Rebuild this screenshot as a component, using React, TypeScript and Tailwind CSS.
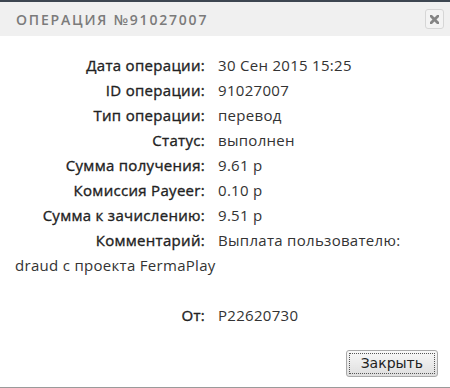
import React from "react";

interface Row {
  label: string;
  value: React.ReactNode;
}

const rows: Row[] = [
  { label: "Дата операции:", value: "30 Сен 2015 15:25" },
  { label: "ID операции:", value: "91027007" },
  { label: "Тип операции:", value: "перевод" },
  { label: "Статус:", value: "выполнен" },
  { label: "Сумма получения:", value: "9.61 р" },
  { label: "Комиссия Payeer:", value: "0.10 р" },
  { label: "Сумма к зачислению:", value: "9.51 р" },
];

// labels are a touch heavier than the values
const labelCls =
  "inline-block w-[190px] text-right text-[#222] mr-[13px] tracking-[0.3px] [-webkit-text-stroke:0.35px_#222]";

export default function App() {
  return (
    <div className="w-[450px] h-[388px] bg-white flex flex-col border-t-2 border-[#3d4651] font-['Open_Sans',sans-serif] text-[#333]">
      {/* Header */}
      <div className="h-[34px] bg-[#f0f0f0] flex items-center justify-between pl-4 pr-[6px]">
        <h1 className="text-[14px] font-semibold tracking-[1.8px] text-[#7b7b7b]">ОПЕРАЦИЯ №91027007</h1>
        <button className="w-[19px] h-[20px] rounded-[3px] border border-[#d6d6d6] bg-[#f3f3f3] flex items-center justify-center">
          <svg width="9" height="9" viewBox="0 0 9 9">
            <path d="M1 1 L8 8 M8 1 L1 8" stroke="#858585" strokeWidth="2.8" strokeLinecap="square" />
          </svg>
        </button>
      </div>

      {/* Details */}
      <div className="flex-1 pt-[17px] px-[15px] text-[15px] leading-[25px] tracking-[0.3px]">
        {rows.map((r) => (
          <div key={r.label}>
            <span className={labelCls}>{r.label}</span>
            <span>{r.value}</span>
          </div>
        ))}
        <div>
          <span className={labelCls}>Комментарий:</span>
          Выплата пользователю:
          <br />
          draud с проекта FermaPlay
        </div>
        <div className="h-[25px]" />
        <div>
          <span className={labelCls}>От:</span>
          <span>P22620730</span>
        </div>
      </div>

      {/* Footer */}
      <div className="flex justify-end pr-[12px] pb-[10px] border-b border-[#9a9a9a]">
        <button className="h-[27px] px-[2px] rounded-[3px] border border-[#a9a9a9] bg-gradient-to-b from-[#f8f8f8] to-[#dedede] flex items-center">
          <span className="h-[21px] px-[11px] border border-dotted border-[#555] flex items-center font-['DejaVu_Sans',sans-serif] text-[14px] text-[#222]">
            Закрыть
          </span>
        </button>
      </div>
    </div>
  );
}
